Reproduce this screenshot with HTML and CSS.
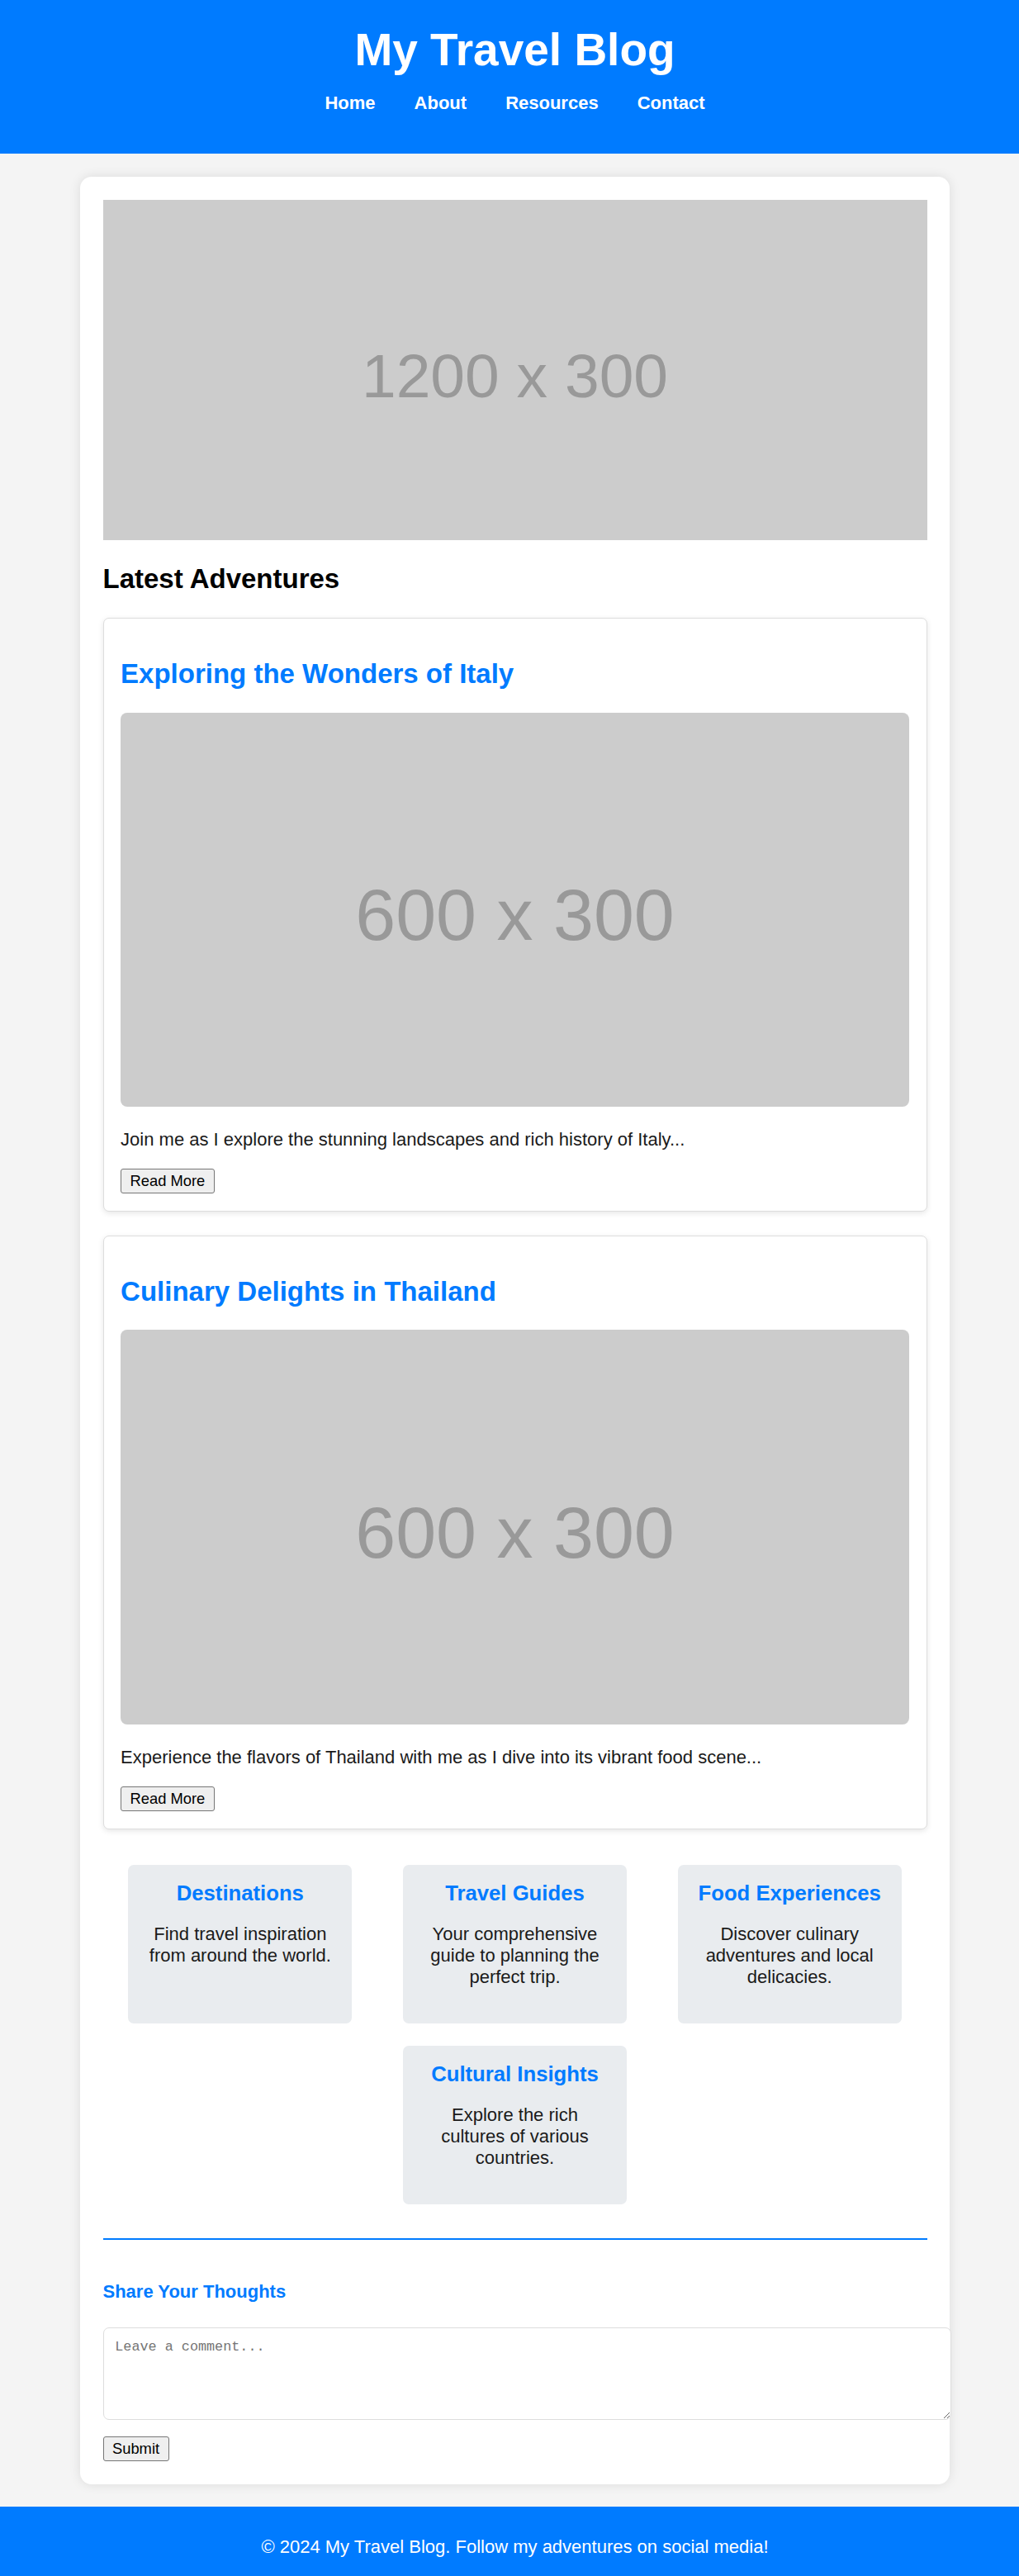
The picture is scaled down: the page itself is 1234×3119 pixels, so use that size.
FILE: index.html
```html
<!DOCTYPE html>
<html lang="en">
<head>
<meta charset="utf-8">
<title>My Travel Blog</title>
<link rel="stylesheet" href="styles.css">
</head>
<body>
<header class="site-header">
  <h1 class="site-title">My Travel Blog</h1>
  <nav>
    <ul class="nav-list">
      <li><a class="nav-link" href="#">Home</a></li>
      <li><a class="nav-link" href="#">About</a></li>
      <li><a class="nav-link" href="#">Resources</a></li>
      <li><a class="nav-link" href="#">Contact</a></li>
    </ul>
  </nav>
</header>
<main class="container">
  <div class="hero-img"><span>1200 x 300</span></div>
  <h2 class="section-title">Latest Adventures</h2>
  <article class="post">
    <h2 class="post-title">Exploring the Wonders of Italy</h2>
    <div class="post-img"><span>600 x 300</span></div>
    <p class="post-text">Join me as I explore the stunning landscapes and rich history of Italy...</p>
    <button class="btn">Read More</button>
  </article>
  <article class="post">
    <h2 class="post-title">Culinary Delights in Thailand</h2>
    <div class="post-img"><span>600 x 300</span></div>
    <p class="post-text">Experience the flavors of Thailand with me as I dive into its vibrant food scene...</p>
    <button class="btn">Read More</button>
  </article>
  <section class="categories">
    <div class="category">
      <h3 class="category-title">Destinations</h3>
      <p class="category-text">Find travel inspiration from around the world.</p>
    </div>
    <div class="category">
      <h3 class="category-title">Travel Guides</h3>
      <p class="category-text">Your comprehensive guide to planning the perfect trip.</p>
    </div>
    <div class="category">
      <h3 class="category-title">Food Experiences</h3>
      <p class="category-text">Discover culinary adventures and local delicacies.</p>
    </div>
    <div class="category">
      <h3 class="category-title">Cultural Insights</h3>
      <p class="category-text">Explore the rich cultures of various countries.</p>
    </div>
  </section>
  <section class="comments">
    <h4 class="comments-title">Share Your Thoughts</h4>
    <form class="comment-form">
      <textarea class="comment-input" placeholder="Leave a comment..."></textarea>
      <button class="btn" type="submit">Submit</button>
    </form>
  </section>
</main>
<footer class="site-footer">
  <p class="footer-text">© 2024 My Travel Blog. Follow my adventures on social media!</p>
</footer>
</body>
</html>
```
FILE: styles.css
```css
html {
  overflow-x: hidden;
}

body {
  margin: 0;
  width: 1247px;
  font-family: "Liberation Sans", Arial, sans-serif;
  font-size: 22px;
  color: #1a1a1a;
  background: #f4f4f4;
}

.site-header {
  background: #007bff;
  color: #fff;
  text-align: center;
  padding: 27.5px 0;
}

.site-title {
  margin: 0;
  font-size: 55px;
  font-weight: bold;
  line-height: normal;
}

.nav-list {
  list-style: none;
  margin: 20.6px 0;
  padding: 0;
  display: flex;
  justify-content: center;
  gap: 47px;
}

.nav-link {
  color: #fff;
  text-decoration: none;
  font-weight: bold;
}

.container {
  width: 1053px;
  box-sizing: border-box;
  margin: 28px auto 27.5px;
  padding: 27.5px;
  background: #fff;
  border-radius: 14px;
  box-shadow: 0 0 14px rgba(0, 0, 0, 0.1);
}

.hero-img {
  height: 412.5px;
  box-sizing: border-box;
  padding-top: 15px;
  background: #ccc;
  color: #999;
  font-size: 75px;
  display: flex;
  align-items: center;
  justify-content: center;
}

.section-title {
  font-size: 33px;
  color: #000;
  margin: 27.5px 0 28.5px;
}

.post {
  background: #fff;
  border: 1px solid #ddd;
  border-radius: 7px;
  padding: 20.6px;
  margin-bottom: 29.3px;
  box-shadow: 0 2px 7px rgba(0, 0, 0, 0.1);
}

.post-title {
  font-size: 33px;
  color: #007bff;
  margin: 27.4px 0;
}

.post-img {
  aspect-ratio: 2 / 1;
  box-sizing: border-box;
  padding-top: 14px;
  background: #ccc;
  border-radius: 8px;
  color: #999;
  font-size: 88px;
  display: flex;
  align-items: center;
  justify-content: center;
}

.post-text {
  margin: 27px 0 22px;
}

.btn {
  font-family: "Liberation Sans", Arial, sans-serif;
  font-size: 18.33px;
  line-height: normal;
  color: #000;
  background: #efefef;
  border: 1px solid #767676;
  border-radius: 3px;
  padding: 3.1px 10.5px;
}

.categories {
  display: flex;
  flex-wrap: wrap;
  justify-content: space-around;
}

.category {
  width: 271px;
  box-sizing: border-box;
  margin: 13.75px;
  padding: 20px 20.6px 21px;
  background: #e9ecef;
  border-radius: 7px;
  text-align: center;
}

.category-title {
  margin: 0;
  font-size: 25.7px;
  color: #007bff;
}

.category-text {
  margin: 22px 0;
}

.comments {
  margin-top: 27.5px;
  border-top: 2.75px solid #007bff;
  padding-top: 20.6px;
}

.comments-title {
  font-size: 22px;
  color: #007bff;
  margin: 29.3px 0;
}

.comment-input {
  display: block;
  box-sizing: content-box;
  width: 100%;
  height: 82.5px;
  padding: 13.75px;
  margin: 0 0 20.5px;
  border: 1px solid #ddd;
  border-radius: 7px;
  font-family: "Liberation Mono", monospace;
  font-size: 16.8px;
}

.site-footer {
  background: #007bff;
  color: #fff;
  text-align: center;
  padding: 35.7px 0 25px;
}

.footer-text {
  margin: 0;
}
```
